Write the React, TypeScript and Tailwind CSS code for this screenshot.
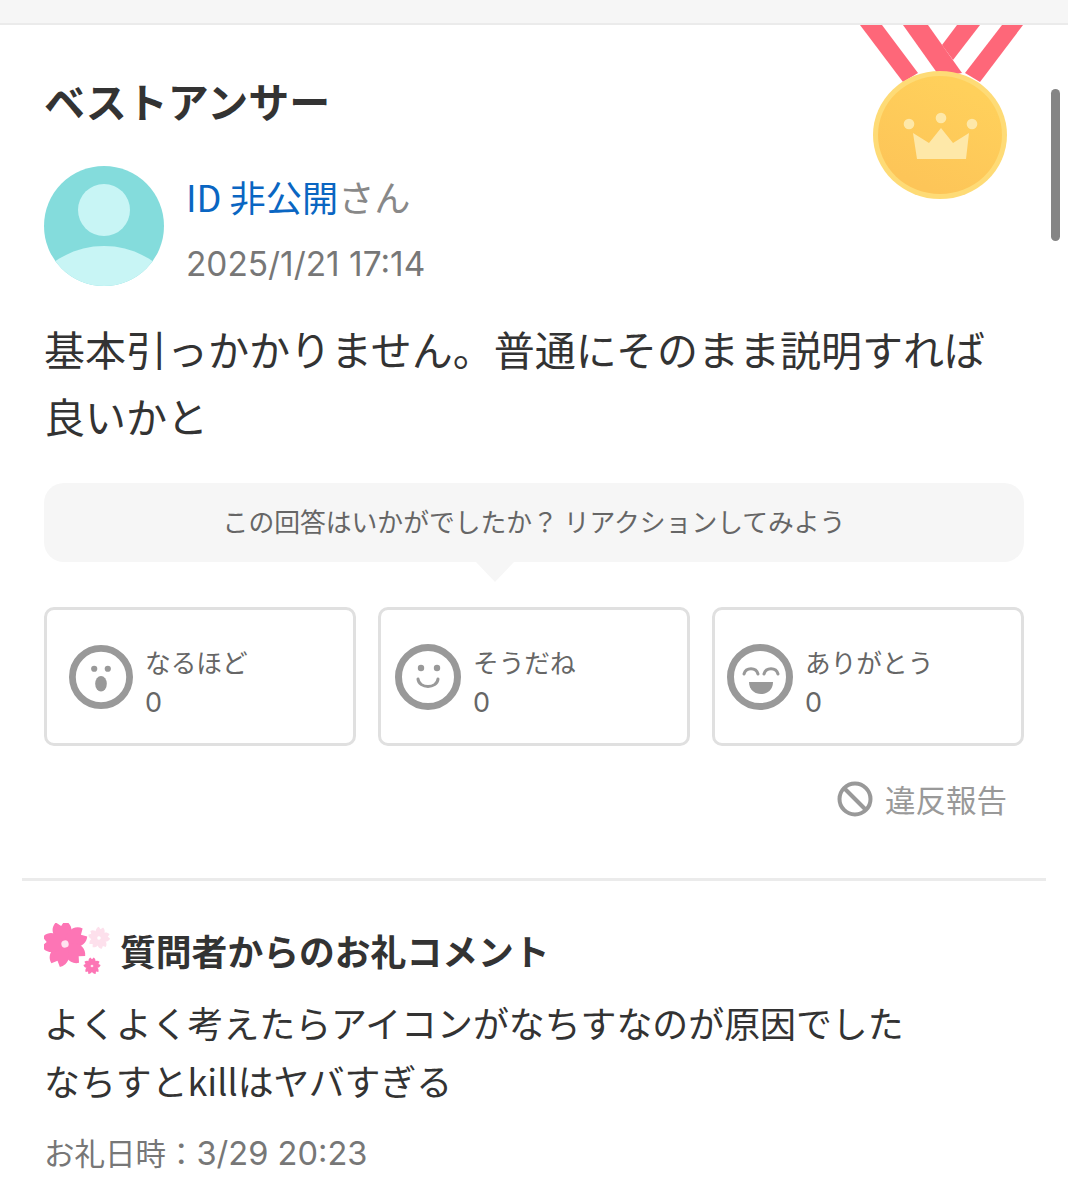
import React from "react";

function Medal() {
  return (
    <svg width="170" height="176" viewBox="0 0 170 176" className="absolute right-[44px] top-[25px]">
      <defs>
        <linearGradient id="g" x1="0.3" y1="0.9" x2="0.7" y2="0.1">
          <stop offset="0" stopColor="#fdc558" />
          <stop offset="1" stopColor="#ffd05b" />
        </linearGradient>
      </defs>
      <path d="M6 0H28L64 48 49 57Z" fill="#fe6779" />
      <path d="M103 0H126L99 35 88 20Z" fill="#fe6779" />
      <path d="M49 0H74L108 48 86 52Z" fill="#fe6779" />
      <path d="M148 0H169L126 57 111 48Z" fill="#fe6779" />
      <ellipse cx="86" cy="110" rx="67" ry="64" fill="#fedb76" />
      <ellipse cx="86" cy="110" rx="62" ry="59" fill="url(#g)" />
      <circle cx="55" cy="99" r="5.300" fill="#fee8a8" />
      <circle cx="87" cy="93" r="5.300" fill="#fee8a8" />
      <circle cx="118" cy="99" r="5.300" fill="#fee8a8" />
      <path d="M59 108 75 118 87 103 99 118 115 108 112 134H63Z" fill="#fee8a8" />
    </svg>
  );
}

function Avatar() {
  return (
    <svg width="120" height="120" viewBox="0 0 120 120" className="shrink-0">
      <defs>
        <clipPath id="c"><circle cx="60" cy="60" r="60" /></clipPath>
      </defs>
      <circle cx="60" cy="60" r="60" fill="#84dcdc" />
      <circle cx="60" cy="44" r="26" fill="#c8f5f5" />
      <path d="M0 120V104C18 88 38 80 60 80S102 88 120 104V120Z" fill="#c8f5f5" clipPath="url(#c)" />
    </svg>
  );
}

function Face({ kind, size }: { kind: "oh" | "smile" | "laugh"; size: number }) {
  return (
    <svg width={size} height={size} viewBox="0 0 66 66" className="shrink-0">
      <circle cx="33" cy="33" r="29.500" fill="#fff" stroke="#999" strokeWidth="7" />
      {kind === "oh" && (
        <>
          <circle cx="26" cy="24.500" r="3.200" fill="#999" />
          <circle cx="40" cy="24.500" r="3.200" fill="#999" />
          <ellipse cx="33" cy="40" rx="6" ry="8" fill="#999" />
        </>
      )}
      {kind === "smile" && (
        <>
          <circle cx="26" cy="24" r="3.200" fill="#999" />
          <circle cx="42" cy="24" r="3.200" fill="#999" />
          <path d="M23 35C24 45 42 45 43 35" fill="none" stroke="#999" strokeWidth="3" strokeLinecap="round" />
        </>
      )}
      {kind === "laugh" && (
        <>
          <path d="M17 30C19 23 29 23 31 30" fill="none" stroke="#999" strokeWidth="3" strokeLinecap="round" />
          <path d="M37 30C39 23 49 23 51 30" fill="none" stroke="#999" strokeWidth="3" strokeLinecap="round" />
          <path d="M22 38H46C46 54 22 54 22 38Z" fill="#999" />
        </>
      )}
    </svg>
  );
}

function Reaction({ kind, label, pad, size }: { kind: "oh" | "smile" | "laugh"; label: string; pad: string; size: number }) {
  return (
    <div className={`flex h-[139px] w-[312px] items-center rounded-[10px] border-[3px] border-[#e0e0e0] bg-white ${pad}`}>
      <Face kind={kind} size={size} />
      <div className="ml-[12px] flex flex-col pt-[10px] text-[25.700px] leading-[39px] text-[#666]">
        <span>{label}</span>
        <span className="mt-[2px] font-['Inter'] text-[27px]">0</span>
      </div>
    </div>
  );
}

function Sakura() {
  const petal = "M0 0C-0.5 -0.3 -0.52 -0.78 -0.2 -1L0 -0.8L0.2 -1C0.52 -0.78 0.5 -0.3 0 0Z";
  const flower = (cx: number, cy: number, r: number, rot: number, fill: string, hole: string) => (
    <g transform={`translate(${cx} ${cy}) rotate(${rot}) scale(${r})`}>
      {[0, 72, 144, 216, 288].map((a) => (
        <path key={a} d={petal} fill={fill} transform={`rotate(${a})`} />
      ))}
      <circle r="0.16" fill={hole} />
    </g>
  );
  return (
    <svg width="66" height="54" viewBox="0 0 66 54" className="shrink-0">
      {flower(21, 21, 23, -12, "#fd75b5", "#ffe3f0")}
      {flower(55, 15, 11, 10, "#fde0ec", "#fff")}
      {flower(48, 43, 8.500, 0, "#fd75b5", "#ffe3f0")}
    </svg>
  );
}

export default function App() {
  return (
    <div
      className="relative h-[1200px] w-[1068px] overflow-hidden bg-white text-[#333]"
      style={{ fontFamily: '"Noto Sans CJK JP", "Noto Sans", sans-serif' }}
    >
      <div className="h-[25px] border-b-2 border-[#ebebeb] bg-[#f6f6f6]" />
      <Medal />
      <div className="absolute right-[8px] top-[89px] h-[152px] w-[9px] rounded-full bg-[#858585]" />

      <div className="px-[44px]">
        <h2 className="mt-[46px] text-[41px] font-bold leading-[58px] text-[#333]">ベストアンサー</h2>

        <div className="mt-[37px] flex items-start">
          <Avatar />
          <div className="ml-[22px] flex flex-col">
            <div className="mt-[4px] text-[36.200px] leading-[52px] text-[#888]">
              <span className="text-[#0a66c2]">ID 非公開</span>さん
            </div>
            <div className="mt-[20px] font-['Inter'] text-[33.400px] leading-[44px] text-[#777]">2025/1/21 17:14</div>
          </div>
        </div>

        <p className="mt-[29px] w-[960px] text-[41px] leading-[67px] text-[#333]">
          基本引っかかりません。普通にそのまま説明すれば良いかと
        </p>

        <div className="relative mt-[34px] flex h-[79px] items-center justify-center rounded-[20px] bg-[#f6f6f6] pb-[2px] text-[25.800px] text-[#666]">
          この回答はいかがでしたか？ リアクションしてみよう
          <div className="absolute left-[432px] top-full h-0 w-0 border-x-[19px] border-t-[20px] border-x-transparent border-t-[#f6f6f6]" />
        </div>

        <div className="mt-[45px] flex gap-[22px]">
          <Reaction kind="oh" label="なるほど" pad="pl-[22px]" size={64} />
          <Reaction kind="smile" label="そうだね" pad="pl-[14px]" size={66} />
          <Reaction kind="laugh" label="ありがとう" pad="pl-[12px]" size={66} />
        </div>

        <div className="mt-[33px] flex items-center justify-end pr-[17px] text-[30.500px] leading-[40px] text-[#999]">
          <svg width="36" height="36" viewBox="0 0 36 36" className="mr-[12px]">
            <circle cx="18" cy="18" r="15.500" fill="none" stroke="#999" strokeWidth="4" />
            <path d="M7 7 29 29" stroke="#999" strokeWidth="4" />
          </svg>
          違反報告
        </div>
      </div>

      <div className="mx-[22px] mt-[59px] border-t-[3px] border-[#ebebeb]" />

      <div className="px-[44px]">
        <div className="mt-[42px] flex items-center">
          <Sakura />
          <h3 className="ml-[10px] text-[35.800px] font-bold leading-[50px] text-[#333]">質問者からのお礼コメント</h3>
        </div>
        <p className="mt-[16px] text-[35.900px] leading-[58px] text-[#333]">
          よくよく考えたらアイコンがなちすなのが原因でした
          <br />
          なちすとkillはヤバすぎる
        </p>
        <div className="mt-[21px] text-[30.500px] leading-[44px] text-[#777]">
          お礼日時：<span className="font-['Inter'] text-[32.600px]">3/29 20:23</span>
        </div>
      </div>
    </div>
  );
}
